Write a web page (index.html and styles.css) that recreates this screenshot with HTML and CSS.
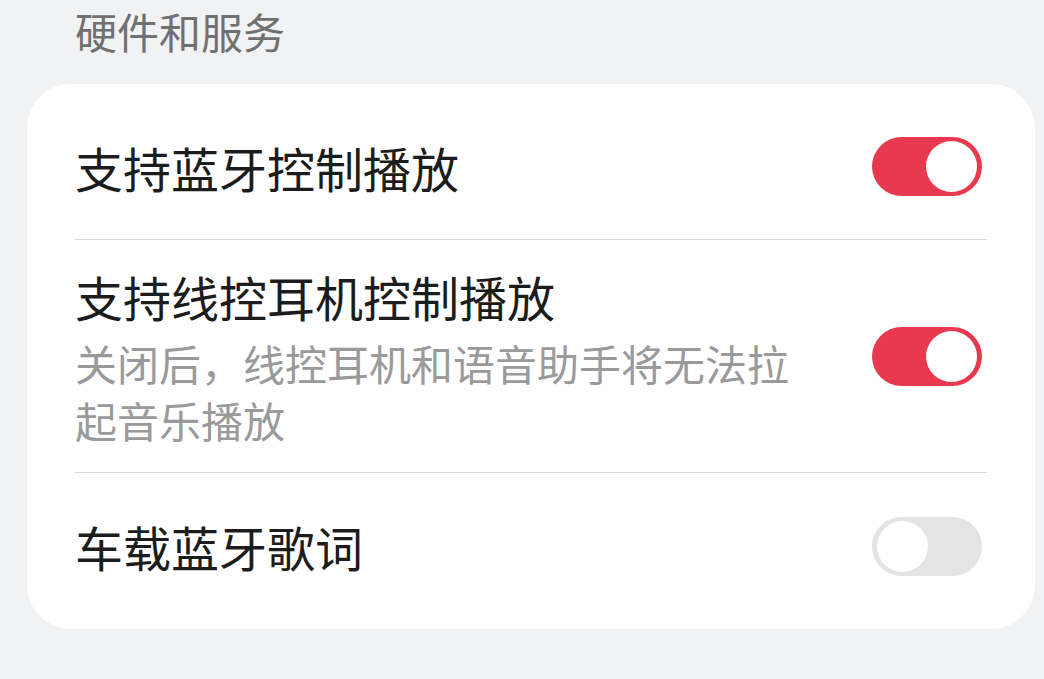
FILE: index.html
```html
<!DOCTYPE html>
<html lang="zh-CN">
<head>
<meta charset="utf-8">
<title>硬件和服务</title>
<link rel="stylesheet" href="styles.css">
</head>
<body>
<div class="page">
  <div class="section-title">硬件和服务</div>
  <div class="card">
    <div class="row">
      <div class="text">
        <div class="title">支持蓝牙控制播放</div>
      </div>
      <div class="toggle on"><span class="knob"></span></div>
    </div>
    <div class="row">
      <div class="text">
        <div class="title">支持线控耳机控制播放</div>
        <div class="desc">关闭后，线控耳机和语音助手将无法拉起音乐播放</div>
      </div>
      <div class="toggle on"><span class="knob"></span></div>
    </div>
    <div class="row">
      <div class="text">
        <div class="title">车载蓝牙歌词</div>
      </div>
      <div class="toggle off"><span class="knob"></span></div>
    </div>
  </div>
</div>
</body>
</html>
```

FILE: styles.css
```css
html, body {
  margin: 0;
  padding: 0;
  background: #f1f2f4;
}
body {
  font-family: "Noto Sans CJK SC", "Noto Sans", sans-serif;
  width: 1044px;
  height: 679px;
  overflow: hidden;
}
.page {
  padding: 0 9px 0 27px;
}
.section-title {
  padding-left: 48px;
  font-size: 42px;
  line-height: 62px;
  color: #707070;
  margin-bottom: 22px;
}
.card {
  background: #ffffff;
  border-radius: 44px;
  padding: 10px 48px;
}
.row {
  display: flex;
  align-items: center;
  justify-content: space-between;
  min-height: 146px;
  box-sizing: border-box;
  padding: 24px 0;
  border-bottom: 1px solid #d9d9d9;
}
.row:last-child {
  border-bottom: none;
}
.text {
  max-width: 730px;
}
.title {
  font-size: 48px;
  line-height: 64px;
  color: #1c1c1c;
}
.desc {
  margin-top: 6px;
  font-size: 42px;
  line-height: 57px;
  color: #9a9a9a;
}
.toggle {
  flex: none;
  width: 110px;
  height: 59px;
  border-radius: 30px;
  margin-right: 5px;
  display: flex;
  align-items: center;
  box-sizing: border-box;
  padding: 0 5px;
}
.toggle.on {
  background: #e8394f;
  justify-content: flex-end;
}
.toggle.off {
  background: #e4e4e4;
  justify-content: flex-start;
}
.knob {
  width: 51px;
  height: 51px;
  border-radius: 50%;
  background: #ffffff;
}
```
